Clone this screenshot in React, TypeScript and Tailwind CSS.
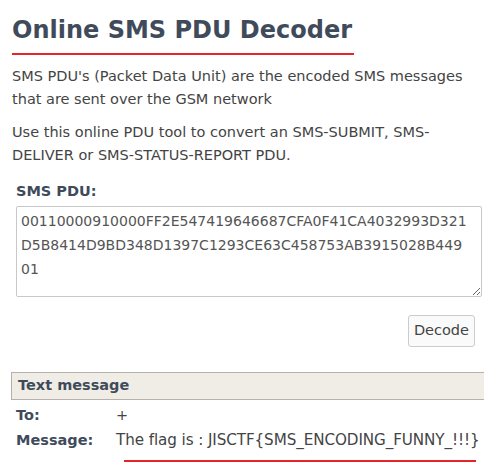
import React from 'react';

const PDU = [
  '00110000910000FF2E547419646687CFA0F41CA4032993D321',
  'D5B8414D9BD348D1397C1293CE63C458753AB3915028B449',
  '01',
].join('\n');

export default function App() {
  return (
    <div className="w-[503px] h-[462px] overflow-hidden bg-white font-['DejaVu_Sans',Verdana,sans-serif] text-[#444]">
      <div className="pl-[12px] pt-[14px]">
        <h1 className="inline-block text-[24px] font-bold leading-[32px] text-[#3f4b5b] pb-[7px] border-b-2 border-[#e8242b] pr-[2px]">
          Online SMS PDU Decoder
        </h1>
      </div>

      <div className="px-[12px] pt-[10px] text-[14.5px] leading-[23px]">
        <p>SMS PDU's (Packet Data Unit) are the encoded SMS messages that are sent over the GSM network</p>
        <p className="mt-[10px]">Use this online PDU tool to convert an SMS-SUBMIT, SMS-DELIVER or SMS-STATUS-REPORT PDU.</p>
      </div>

      <div className="px-[16px] pt-[14px]">
        <label className="block text-[14.5px] font-bold text-[#3f4b5b] leading-[20px]">SMS PDU:</label>
        <textarea
          className="mt-[5px] block w-[466px] h-[91px] border border-[#c8c8c8] rounded-[2px] pl-[4px] pr-[2px] pt-[2px] pb-[2px] text-[14px] leading-[24px] text-[#555] font-['DejaVu_Sans',Verdana,sans-serif] whitespace-pre-wrap"
          defaultValue={PDU}
        />
        <div className="flex justify-end pr-[12px] pt-[18px]">
          <button className="h-[32px] px-[5px] border border-[#ccc] rounded-[3px] bg-[#fafafa] text-[14.5px] text-[#444]">
            Decode
          </button>
        </div>
      </div>

      <div className="mt-[25px] ml-[11px] w-[473px] h-[28px] bg-[#f0ede6] border-y border-l border-[#b6b2ab] flex items-center pl-[6px]">
        <span className="text-[14.5px] font-bold text-[#3f4b5b]">Text message</span>
      </div>

      <div className="pl-[16px] pt-[3px] text-[14.5px] leading-[25px]">
        <div className="flex">
          <span className="w-[100px] font-bold text-[#3f4b5b]">To:</span>
          <span>+</span>
        </div>
        <div className="flex">
          <span className="w-[100px] font-bold text-[#3f4b5b]">Message:</span>
          <span className="text-[15.2px] tracking-[-0.1px]">The flag is : JISCTF&#123;SMS_ENCODING_FUNNY_!!!&#125;</span>
        </div>
        <div className="ml-[108px] mt-[7px] w-[352px] h-[2px] bg-[#e8242b]" />
      </div>
    </div>
  );
}
